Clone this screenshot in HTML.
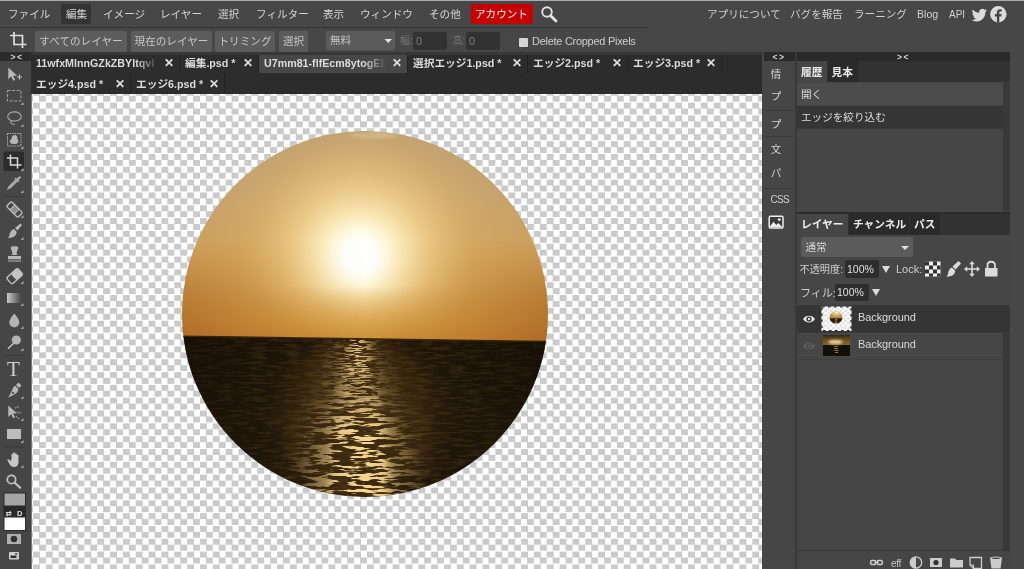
<!DOCTYPE html>
<html lang="ja">
<head>
<meta charset="utf-8">
<title>Photopea</title>
<style>
*{box-sizing:border-box;margin:0;padding:0}
html,body{width:1024px;height:569px;overflow:hidden;background:#474747}
body{position:relative;font-family:"Liberation Sans","Noto Sans CJK JP",sans-serif;font-size:11px;color:#dcdcdc;line-height:1}
.a{position:absolute;white-space:nowrap}
.t{position:absolute;white-space:nowrap;line-height:14px;height:14px}
#topline{left:0;top:0;width:1024px;height:1px;background:rgba(173,173,173,.996)}
/* menu */
.mi{top:6.5px;font-size:10.6px;color:#d6d6d6}
.mr{top:6.5px;font-size:10.6px;color:#d0d0d0}
#edit{left:61px;top:4px;width:30px;height:20px;background:rgba(52,52,52,.996);border-radius:2px}
#acct{left:471px;top:4px;width:62px;height:20px;background:rgba(200,0,0,.996);border-radius:2px}
#optline{left:0;top:27px;width:648px;height:1px;background:rgba(51,51,51,.996)}
/* options */
.btn{top:31px;height:21px;background:rgba(92,92,92,.996);border-radius:2px;color:#c8c8c8;font-size:10.6px;text-align:center;line-height:20px}
.inp{top:32px;height:18px;background:rgba(51,51,51,.996);border-radius:2px;color:#7d7d7d;font-size:11px;line-height:18px;padding-left:3px}
.lbl{top:34px;font-size:10px;color:#7a7a7a}
/* tabs */
#tabbar{left:31px;top:52px;width:731px;height:42px;background:rgba(45,45,45,.996)}
.tab{height:20px;background:rgba(45,45,45,.996);border-right:1px solid #222;font-weight:bold;font-size:10.7px;color:#dcdcdc;line-height:20px;padding-left:5px;overflow:hidden}
.tab.act{background:rgba(72,72,72,.996)}
.tab .x{position:absolute;top:0;right:4px;width:13px;text-align:center;font-size:12px;font-weight:bold;color:#e0e0e0;background:inherit}
.tab{background-clip:padding-box}
.tab .fd{position:absolute;top:0;right:17px;width:26px;height:20px;background:linear-gradient(90deg,rgba(45,45,45,0),#2d2d2d 85%)}
.tab.act .fd{background:linear-gradient(90deg,rgba(72,72,72,0),#484848 85%)}
/* canvas */
#canvas{left:32px;top:94px;width:730px;height:475px;background-color:rgba(255,255,255,.996);
 background-image:conic-gradient(#cbcbcb 25%,#fff 0 50%,#cbcbcb 0 75%,#fff 0);background-size:12.845px 12.835px;background-position:1px 1.75px;overflow:hidden}
/* left toolbar */
#ltb{left:0;top:52px;width:31px;height:517px;background:rgba(71,71,71,.996)}
#ltbtop{left:0;top:52px;width:31px;height:8.5px;background:rgba(43,43,43,.996)}
/* right */
#rcol{left:762px;top:52px;width:33px;height:517px;background:rgba(71,71,71,.996)}
#rcoltop{left:763.5px;top:52px;width:31px;height:8.5px;background:rgba(43,43,43,.996)}
#rsep{left:795px;top:52px;width:2.5px;height:517px;background:rgba(58,58,58,.996)}
#rp{left:797px;top:53px;width:213px;height:516px;background:rgba(71,71,71,.996)}
.rc{left:768px;font-size:10.5px;color:#d4d4d4;width:16px;text-align:center}
.ptab{height:20px;background:rgba(43,43,43,.996);font-weight:bold;font-size:10.7px;color:#eee;line-height:20px;padding-left:4px}
.ptab.act{background:rgba(71,71,71,.996)}
.hrow{font-size:10.6px;color:#dcdcdc;line-height:22px;padding-left:4px}
</style>
</head>
<body>
<div id="wrap" style="position:absolute;left:0;top:0;width:1024px;height:569px;opacity:.999;will-change:opacity">
<div class="a" id="topline"></div>
<!-- MENU -->
<div class="a" id="edit"></div>
<div class="a" id="acct"></div>
<span class="t mi" style="left:8px">ファイル</span>
<span class="t mi" style="left:66px">編集</span>
<span class="t mi" style="left:103px">イメージ</span>
<span class="t mi" style="left:160px">レイヤー</span>
<span class="t mi" style="left:218px">選択</span>
<span class="t mi" style="left:256px">フィルター</span>
<span class="t mi" style="left:323px">表示</span>
<span class="t mi" style="left:360px">ウィンドウ</span>
<span class="t mi" style="left:429px">その他</span>
<span class="t mi" style="left:475px;color:#fff">アカウント</span>
<span class="t mr" style="left:707px">アプリについて</span>
<span class="t mr" style="left:790px">バグを報告</span>
<span class="t mr" style="left:854px">ラーニング</span>
<span class="t mr" style="left:917px">Blog</span>
<span class="t mr" style="left:949px;top:7.5px;font-size:10px">API</span>
<div class="a" id="optline"></div>
<!-- OPTIONS -->
<div class="a btn" style="left:35px;width:92px">すべてのレイヤー</div>
<div class="a btn" style="left:131px;width:81px">現在のレイヤー</div>
<div class="a btn" style="left:215px;width:60px">トリミング</div>
<div class="a btn" style="left:279px;width:29px">選択</div>
<div class="a btn" style="left:326px;width:69px;text-align:left;padding-left:4px;height:19px;line-height:19px">無料</div>
<span class="t lbl" style="left:400px">幅:</span>
<div class="a inp" style="left:413px;width:34px">0</div>
<span class="t lbl" style="left:452.5px">高:</span>
<div class="a inp" style="left:466px;width:34px">0</div>
<div class="a" style="left:519px;top:38px;width:9px;height:9px;background:rgba(214,214,214,.996);border-radius:1px"></div>
<span class="t" style="left:532px;top:34px;font-size:11px;color:#cfcfcf;letter-spacing:-.28px">Delete Cropped Pixels</span>
<!-- top icons -->
<svg class="a" style="left:0;top:0" width="1024" height="53" viewBox="0 0 1024 53">
<path d="M14 32v12.500h12.500M10 35.500h12.500v12.500" fill="none" stroke="#e0e0e0" stroke-width="1.700"/>
<circle cx="547" cy="12" r="4.800" fill="none" stroke="#e4e4e4" stroke-width="1.900"/><path d="M550.700 15.700l5.300 5.300" stroke="#e4e4e4" stroke-width="2.800" stroke-linecap="round"/>
<path d="M384.500 39h7.500l-3.750 4z" fill="#e8e8e8"/>
<path d="M987 10.200c-.6.300-1.200.4-1.800.5.700-.4 1.100-1 1.400-1.700-.6.400-1.300.6-2 .8-.6-.6-1.400-1-2.300-1-1.800 0-3.200 1.400-3.200 3.200 0 .2 0 .5.100.7-2.600-.1-5-1.400-6.500-3.300-.3.500-.4 1-.4 1.600 0 1.100.6 2.100 1.400 2.600-.5 0-1-.2-1.400-.4 0 1.500 1.100 2.800 2.500 3.100-.5.100-1 .200-1.400.1.400 1.300 1.600 2.200 2.900 2.200-1.100.9-2.400 1.400-3.900 1.400h-.8c1.400.9 3.100 1.400 4.800 1.400 5.800 0 9-4.800 9-9v-.4c.600-.4 1.200-1 1.600-1.700z" fill="#dcdcdc"/>
<circle cx="998.300" cy="14.300" r="8.200" fill="#dcdcdc"/>
<path d="M999.300 22.500v-6h2l.3-2.400h-2.300v-1.500c0-.7.200-1.200 1.200-1.200h1.200v-2.100c-.2 0-.9-.1-1.800-.1-1.800 0-3 1.100-3 3.100v1.800h-2v2.400h2v6z" fill="#474747"/>
</svg>
<!-- TABS -->
<div class="a" id="tabbar"></div>
<div class="a tab" style="left:31px;top:53px;width:149px">11wfxMlnnGZkZBYltqvI<span class="fd"></span><span class="x">✕</span></div>
<div class="a tab" style="left:180px;top:53px;width:79px">編集.psd *<span class="x">✕</span></div>
<div class="a tab act" style="left:259px;top:53px;width:149px">U7mm81-flfEcm8ytogEB<span class="fd"></span><span class="x">✕</span></div>
<div class="a tab" style="left:408px;top:53px;width:120px">選択エッジ1.psd *<span class="x">✕</span></div>
<div class="a tab" style="left:528px;top:53px;width:100px">エッジ2.psd *<span class="x">✕</span></div>
<div class="a tab" style="left:628px;top:53px;width:94px">エッジ3.psd *<span class="x">✕</span></div>
<div class="a tab" style="left:31px;top:74px;width:100px">エッジ4.psd *<span class="x">✕</span></div>
<div class="a tab" style="left:131px;top:74px;width:94px">エッジ6.psd *<span class="x">✕</span></div>
<div class="a" style="left:31px;top:52px;width:731px;height:2.5px;background:rgba(56,56,56,.996)"></div>
<!-- CANVAS -->
<div class="a" id="canvas">
<svg class="a" style="left:0;top:0" width="731" height="475" viewBox="32 94 731 475">
<defs>
<clipPath id="cs"><path d="M182 336.300L548 341.500v156H182z"/></clipPath>
<clipPath id="cc"><circle cx="365" cy="314" r="183"/></clipPath>
<linearGradient id="sky" x1="0" y1="131" x2="0" y2="341" gradientUnits="userSpaceOnUse">
<stop offset="0" stop-color="#b79d76"/><stop offset=".3" stop-color="#c4a372"/><stop offset=".6" stop-color="#d0a158"/><stop offset=".82" stop-color="#cf9540"/><stop offset="1" stop-color="#c4852e"/>
</linearGradient>
<linearGradient id="hz" x1="0" y1="285" x2="0" y2="341" gradientUnits="userSpaceOnUse">
<stop offset="0" stop-color="#d49a3e" stop-opacity="0"/><stop offset=".6" stop-color="#d2963a" stop-opacity=".6"/><stop offset="1" stop-color="#c98a30" stop-opacity=".85"/>
</linearGradient>
<radialGradient id="sun" cx="360" cy="256" r="210" gradientUnits="userSpaceOnUse">
<stop offset="0" stop-color="#fff"/><stop offset=".08" stop-color="#fffffa"/><stop offset=".135" stop-color="#fff8dc"/><stop offset=".205" stop-color="#fce9b6" stop-opacity=".97"/><stop offset=".34" stop-color="#f1cf8a" stop-opacity=".8"/><stop offset=".55" stop-color="#e0b46a" stop-opacity=".4"/><stop offset=".75" stop-color="#d6aa62" stop-opacity=".14"/><stop offset="1" stop-color="#d0a660" stop-opacity="0"/>
</radialGradient>
<linearGradient id="sea" x1="0" y1="340" x2="0" y2="497" gradientUnits="userSpaceOnUse">
<stop offset="0" stop-color="#20170a"/><stop offset=".5" stop-color="#261c0c"/><stop offset="1" stop-color="#22190b"/>
</linearGradient>
<linearGradient id="wide" x1="182" y1="0" x2="548" y2="0" gradientUnits="userSpaceOnUse">
<stop offset="0" stop-color="#fff" stop-opacity=".17"/><stop offset=".5" stop-color="#fff" stop-opacity=".32"/><stop offset="1" stop-color="#fff" stop-opacity=".17"/>
</linearGradient>
<linearGradient id="vfar" x1="0" y1="338" x2="0" y2="420" gradientUnits="userSpaceOnUse"><stop offset="0" stop-color="#fff"/><stop offset=".4" stop-color="#fff" stop-opacity=".8"/><stop offset="1" stop-color="#fff" stop-opacity="0"/></linearGradient>
<linearGradient id="vnear" x1="0" y1="345" x2="0" y2="430" gradientUnits="userSpaceOnUse"><stop offset="0" stop-color="#fff" stop-opacity="0"/><stop offset="1" stop-color="#fff"/></linearGradient>
<filter id="bl" x="182" y="320" width="366" height="200" filterUnits="userSpaceOnUse"><feGaussianBlur stdDeviation="14 5"/></filter>
<mask id="mrefl" maskUnits="userSpaceOnUse" x="182" y="338" width="366" height="160"><rect x="182" y="338" width="366" height="160" fill="url(#wide)"/><path d="M344 334h22l40 94 14 80h-124l12-80z" fill="#fff" filter="url(#bl)"/></mask>
<mask id="mfar" maskUnits="userSpaceOnUse" x="182" y="338" width="366" height="160"><rect x="182" y="338" width="366" height="160" fill="url(#vfar)"/></mask>
<mask id="mnear" maskUnits="userSpaceOnUse" x="182" y="338" width="366" height="160"><rect x="182" y="338" width="366" height="160" fill="url(#vnear)"/></mask>
<filter id="wv" x="182" y="338" width="366" height="160" filterUnits="userSpaceOnUse" color-interpolation-filters="sRGB">
<feTurbulence type="fractalNoise" baseFrequency="0.045 0.3" numOctaves="3" seed="7" result="n"/>
<feColorMatrix in="n" type="matrix" values="0 0 0 0 0.97  0 0 0 0 0.84  0 0 0 0 0.56  10 7 0 0 -8.35"/>
</filter>
<filter id="wv2" x="182" y="338" width="366" height="160" filterUnits="userSpaceOnUse" color-interpolation-filters="sRGB">
<feTurbulence type="fractalNoise" baseFrequency="0.09 0.6" numOctaves="2" seed="3" result="n"/>
<feColorMatrix in="n" type="matrix" values="0 0 0 0 0.97  0 0 0 0 0.83  0 0 0 0 0.54  10 7 0 0 -8.35"/>
</filter>
<filter id="wd" x="182" y="338" width="366" height="160" filterUnits="userSpaceOnUse" color-interpolation-filters="sRGB">
<feTurbulence type="fractalNoise" baseFrequency="0.06 0.4" numOctaves="3" seed="11" result="n"/>
<feColorMatrix in="n" type="matrix" values="0 0 0 0 0.42  0 0 0 0 0.30  0 0 0 0 0.15  3.4 2.6 0 0 -2.75"/>
</filter>
<filter id="bl2" x="182" y="320" width="366" height="200" filterUnits="userSpaceOnUse"><feGaussianBlur stdDeviation="5 3"/></filter>
<mask id="mc2" maskUnits="userSpaceOnUse" x="182" y="338" width="366" height="160"><path d="M344 334h22l38 94 14 80h-122l14-80z" fill="#fff" opacity=".55" filter="url(#bl)"/><path d="M353 336h10l20 80 8 84h-62l6-84z" fill="#fff" filter="url(#bl2)"/></mask>
<linearGradient id="hzx" x1="182" y1="0" x2="548" y2="0" gradientUnits="userSpaceOnUse">
<stop offset="0" stop-color="#9c5c24" stop-opacity=".62"/><stop offset=".3" stop-color="#a8682a" stop-opacity=".22"/><stop offset=".5" stop-color="#b07030" stop-opacity="0"/><stop offset=".7" stop-color="#a8682a" stop-opacity=".22"/><stop offset="1" stop-color="#9c5c24" stop-opacity=".62"/>
</linearGradient>
<linearGradient id="hzm" x1="0" y1="240" x2="0" y2="341" gradientUnits="userSpaceOnUse"><stop offset="0" stop-color="#fff" stop-opacity="0"/><stop offset=".6" stop-color="#fff" stop-opacity=".7"/><stop offset="1" stop-color="#fff" stop-opacity="1"/></linearGradient>
<mask id="mhz" maskUnits="userSpaceOnUse" x="182" y="240" width="366" height="104"><rect x="182" y="240" width="366" height="104" fill="url(#hzm)"/></mask>
<filter id="bc" x="-20%" y="-150%" width="140%" height="400%"><feGaussianBlur stdDeviation="3 1.2"/></filter>
<linearGradient id="sdk" x1="182" y1="0" x2="548" y2="0" gradientUnits="userSpaceOnUse">
<stop offset="0" stop-color="#0c0904" stop-opacity=".55"/><stop offset=".32" stop-color="#0c0904" stop-opacity=".12"/><stop offset=".5" stop-color="#0c0904" stop-opacity="0"/><stop offset=".68" stop-color="#0c0904" stop-opacity=".12"/><stop offset="1" stop-color="#0c0904" stop-opacity=".55"/>
</linearGradient>
</defs>
<g clip-path="url(#cc)">
<rect x="182" y="131" width="366" height="212" fill="url(#sky)"/>
<rect x="182" y="131" width="366" height="212" fill="url(#sun)"/>
<ellipse cx="374" cy="135.500" rx="24" ry="3" fill="#d6c29e" opacity=".6" filter="url(#bc)"/>
<rect x="182" y="285" width="366" height="58" fill="url(#hz)"/>
<g mask="url(#mhz)"><rect x="182" y="240" width="366" height="104" fill="url(#hzx)"/></g>
<path d="M182 336.300L548 341.500v156H182z" fill="url(#sea)"/>
<g clip-path="url(#cs)">
<rect x="182" y="338" width="366" height="160" filter="url(#wd)" opacity=".34"/>
<ellipse cx="358" cy="420" rx="75" ry="85" fill="#74501c" opacity=".3" filter="url(#bl)"/>
<g mask="url(#mc2)"><g mask="url(#mnear)"><rect x="182" y="338" width="366" height="160" filter="url(#wv)"/></g><g mask="url(#mfar)"><rect x="182" y="338" width="366" height="160" filter="url(#wv2)"/></g></g>
<rect x="182" y="334" width="366" height="164" fill="url(#sdk)"/>
</g>
<path d="M182 336.300L548 341.500" stroke="#3a2408" stroke-width="1.500" fill="none"/>
</g>
</svg>

</div>
<!-- LEFT TOOLBAR -->
<div class="a" id="ltb"></div>
<div class="a" style="left:31px;top:94px;width:1px;height:475px;background:rgba(122,122,122,.996)"></div>
<div class="a" id="ltbtop"></div>
<svg class="a" style="left:0;top:0" width="32" height="569" viewBox="0 0 32 569">
<g fill="#b8b8b8" stroke="none">
<!-- corner triangles -->
<path d="M23.5 102v3h-3zM23.5 124v3h-3zM23.5 146v3h-3zM23.5 168v3h-3zM23.5 190v3h-3zM23.5 215v3h-3zM23.5 237v3h-3zM23.5 281v3h-3zM23.5 303v3h-3zM23.5 326v3h-3zM23.5 348v3h-3zM23.5 396v3h-3zM23.5 418v3h-3zM23.5 440v3h-3zM23.5 465v3h-3z" fill="#a8a8a8"/>
<!-- move -->
<path d="M8.3 67.5v11.8l2.9-2.7 2.1 4.2 1.9-.9-2-4.1h4z"/>
<path d="M19.5 74.5v5M17 77h5" stroke="#c4c4c4" stroke-width="1.2" fill="none"/>
<!-- marquee -->
<rect x="7.5" y="90.5" width="13.5" height="10.5" fill="none" stroke="#a4a4a4" stroke-width="1" stroke-dasharray="3 1.6"/>
<!-- lasso -->
<ellipse cx="14.5" cy="116.5" rx="6.8" ry="4.6" fill="none" stroke="#a8a8a8" stroke-width="1.1"/>
<path d="M12.5 120.5c-2 .2-2.500 2.300-.6 3.200 1.200.5 2.100.3 2.600 1.300" fill="none" stroke="#a8a8a8" stroke-width="1.1"/>
<!-- object select -->
<rect x="7.500" y="133.500" width="13.500" height="12.500" fill="none" stroke="#c4c4c4" stroke-width="1" stroke-dasharray="1.2 1.2"/>
<path d="M13 135.500c2-1.200 4.500-.2 4.300 2.200-.1 1.500 1.200 2.300 1 4-.3 2-2.500 2.300-4.500 2.300s-4-.5-4-2.500c0-1.800 1.700-2 1.900-3.500.2-1.200.4-1.900 1.300-2.500z"/>
<!-- crop active bg -->
<rect x="3.500" y="151.500" width="20.500" height="19.500" rx="1.500" fill="#2c2c2c"/>
<path d="M10.5 154.500v10.500h11M7 158h10.500v10.500" fill="none" stroke="#dadada" stroke-width="1.500"/>
<path d="M23.500 168v3h-3z" fill="#b8b8b8"/>
<!-- eyedropper -->
<path d="M19.200 176.500c1-.9 2.400.5 1.500 1.500l-2.200 2.300.9.900-1.300 1.300-.8-.8-6.500 6.500c-.7.700-1.500.3-2.200 1l-.8.800-.9-.9.800-.8c.7-.7.300-1.500 1-2.200l6.500-6.500-.8-.8 1.300-1.300.9.900z" fill="#aaa"/>
<!-- separator -->
<rect x="4" y="196" width="21" height="1" fill="#3a3a3a"/>
<!-- healing -->
<g transform="rotate(45 14.500 209.500)"><rect x="6.500" y="206" width="16" height="7" rx="1.500" fill="none" stroke="#c4c4c4" stroke-width="1.300"/><rect x="11.500" y="206" width="6" height="7" fill="#c4c4c4" opacity=".55"/><path d="M11.500 206v7M17.500 206v7" stroke="#c4c4c4" stroke-width="1"/></g>
<!-- brush -->
<path d="M20.500 223.500l-5.500 4.500 2.500 2.500 4.500-5.500zM14 229l2.500 2.500c.5 3-2 5.500-4.500 6-1.500.3-3 .5-4 1 1-1.200 1.200-2.500 1.500-4 .5-2.500 2-5 4.500-5.500z"/>
<!-- stamp -->
<path d="M11 247c0-1 7-1 7 0 .6 2-.8 3.500-1.200 5-.3 1.200 0 2.300 .7 3h-6c.7-.7 1-1.800 .7-3-.4-1.500-1.800-3-1.200-5zM8 256h13v3.200h-13zM8 260.500h13v1h-13z"/>
<!-- eraser -->
<g transform="rotate(-42 14.500 276)"><rect x="7" y="272" width="15" height="8.500" rx="2" fill="none" stroke="#c4c4c4" stroke-width="1.300"/><rect x="13" y="272" width="9" height="8.500" rx="2" fill="#c4c4c4"/></g>
<!-- dodge -->
<circle cx="16.300" cy="340" r="4.600" fill="#b5b5b5"/><path d="M13.300 343.500l-5.300 5.300" stroke="#c4c4c4" stroke-width="1.600" fill="none"/>
<!-- blur -->
<path d="M14.300 313.500c2 2.800 5 5.500 5 8.700 0 2.800-2.200 5-5 5s-5-2.200-5-5c0-3.200 3-5.900 5-8.700z" fill="#b5b5b5"/>
<!-- separator -->
<rect x="4" y="355" width="21" height="1" fill="#3a3a3a"/>
<!-- pen -->
<path d="M18.500 382.500l3 3-2.500 2.500-3-3zM15.200 385.800l3 3c.3 2.500-1.200 4.500-3.500 5.500l-6.500 3.500 3.500-6.500c1-2.300 1.500-5 3.500-5.500z"/>
<circle cx="13" cy="393" r="1.100" fill="#474747"/>
<!-- path select -->
<path d="M8.300 405.500v11.500l2.900-2.700 2 4 1.900-.9-2-4h4z"/>
<path d="M15 408l4-1.500M17 412l4 1M16 416.500l4 3" stroke="#aaa" stroke-width="1.100" stroke-dasharray="1.500 1" fill="none"/>
<!-- rect -->
<rect x="7" y="429" width="14" height="10" fill="#bdbdbd"/>
<!-- separator -->
<rect x="4" y="446.500" width="21" height="1" fill="#3a3a3a"/>
<!-- hand -->
<path d="M11.500 459v-4.500c0-1.300 1.700-1.300 1.700 0v-1.200c0-1.300 1.800-1.300 1.800 0v1c0-1.300 1.800-1.300 1.800 0v1.500c0-1.300 1.700-1.300 1.700 0v6.200c0 3-1.500 5-4.500 5-2.500 0-3.500-1.200-4.500-3l-2-3.500c-.6-1 .7-1.800 1.400-1l1.600 1.800z" fill="#c8c8c8"/>
<!-- zoom -->
<circle cx="11.500" cy="479.500" r="4.200" fill="none" stroke="#c4c4c4" stroke-width="1.700"/><path d="M14.700 482.700l5.500 5" stroke="#c4c4c4" stroke-width="2.200" stroke-linecap="round"/>
<!-- swatches -->
<rect x="3.500" y="492.500" width="22.500" height="38.500" fill="#2a2a2a"/>
<rect x="4.500" y="493.500" width="20.500" height="12" fill="#a6a6a6"/>
<rect x="4.500" y="517.500" width="20.500" height="12.500" fill="#fff"/>
<!-- quick mask -->
<rect x="7" y="534" width="14" height="10" fill="#b0b0b0"/><circle cx="14" cy="539" r="3.300" fill="#333"/>
<!-- screen mode -->
<rect x="9" y="552" width="10" height="7.500" rx="1" fill="#d0d0d0"/><rect x="10.500" y="555.500" width="6" height="2.500" fill="#333"/><rect x="15" y="553.300" width="2.500" height="1.200" fill="#333"/>
</g>
<defs><linearGradient id="gtool" x1="0" x2="1" y1="0" y2="0"><stop offset="0" stop-color="#c8c8c8"/><stop offset="1" stop-color="#4a4a4a"/></linearGradient></defs>
<rect x="7" y="293" width="14" height="10" fill="url(#gtool)"/>
<text x="7" y="375.500" font-family="Liberation Serif, serif" font-size="21" fill="#d0d0d0">T</text>
<text x="5.500" y="516" font-family="DejaVu Sans, Liberation Sans, sans-serif" font-size="7.500" font-weight="bold" fill="#e0e0e0">⇄</text>
<text x="17" y="516" font-family="Liberation Sans, sans-serif" font-size="7.500" font-weight="bold" fill="#e0e0e0">D</text>
<text x="10.500" y="60" font-family="Liberation Sans, sans-serif" font-size="8.500" font-weight="bold" fill="#d8d8d8" letter-spacing="1.5">&gt;&lt;</text>
</svg>

<!-- RIGHT -->
<div class="a" id="rcol"></div>
<div class="a" id="rcoltop"></div>
<div class="a" id="rsep"></div>
<div class="a" id="rp"></div>
<!-- collapsed column -->
<span class="t" style="left:772.5px;top:52.5px;font-size:8.5px;font-weight:bold;color:#d8d8d8;line-height:9px;height:9px;letter-spacing:1.5px">&lt;&gt;</span>
<span class="t rc" style="top:66.5px">情</span>
<span class="t rc" style="top:89px">プ</span>
<span class="t rc" style="top:116.5px">プ</span>
<span class="t rc" style="top:142px">文</span>
<span class="t rc" style="top:166px">パ</span>
<span class="t" style="left:770.5px;top:193px;font-size:10px;color:#cfcfcf;width:18px;text-align:center;letter-spacing:-.7px">CSS</span>
<div class="a" style="left:764px;top:109.5px;width:30px;height:1px;background:rgba(59,59,59,.996)"></div>
<div class="a" style="left:764px;top:136px;width:30px;height:1px;background:rgba(59,59,59,.996)"></div>
<div class="a" style="left:764px;top:188px;width:30px;height:1px;background:rgba(59,59,59,.996)"></div>
<svg class="a" style="left:768px;top:215px" width="16" height="14" viewBox="0 0 16 14"><rect x="1.200" y="1.200" width="13.800" height="11.800" rx="1.300" fill="#3c3c3c" stroke="#f0f0f0" stroke-width="1.500"/><path d="M1.500 12l4-5.300 2.800 3.300 2-2 4 4z" fill="#f0f0f0"/><circle cx="11.300" cy="4.600" r="1.400" fill="#f0f0f0"/></svg>
<!-- history panel -->
<div class="a" style="left:797px;top:52px;width:213px;height:8.5px;background:rgba(43,43,43,.996)"></div>
<span class="t" style="left:897px;top:52.5px;font-size:8.5px;font-weight:bold;color:#d8d8d8;line-height:9px;height:9px;letter-spacing:1.5px">&gt;&lt;</span>
<div class="a" style="left:797px;top:61px;width:213px;height:21px;background:rgba(51,51,51,.996)"></div>
<div class="a ptab act" style="left:797px;top:61px;width:30px;height:21px;line-height:22px">履歴</div>
<div class="a ptab" style="left:827.5px;top:61px;width:30px;height:21px;line-height:22px">見本</div>
<div class="a" style="left:1003px;top:81px;width:7px;height:130px;background:rgba(58,58,58,.996)"></div>
<div class="a hrow" style="left:797px;top:83px;width:206px;height:22px;background:rgba(77,77,77,.996)">開く</div>
<div class="a hrow" style="left:797px;top:106px;width:206px;height:22px;background:rgba(54,54,54,.996)">エッジを絞り込む</div>
<div class="a" style="left:797px;top:128px;width:206px;height:1px;background:rgba(59,59,59,.996)"></div>
<div class="a" style="left:797px;top:211.5px;width:213px;height:2.5px;background:rgba(45,45,45,.996)"></div>
<!-- layers panel -->
<div class="a" style="left:797px;top:214px;width:213px;height:21px;background:rgba(51,51,51,.996)"></div>
<div class="a ptab act" style="left:797px;top:214px;width:51px;height:21px;line-height:21px">レイヤー</div>
<div class="a ptab" style="left:849px;top:214px;width:60px;height:21px;line-height:21px">チャンネル</div>
<div class="a ptab" style="left:910px;top:214px;width:30px;height:21px;line-height:21px">パス</div>
<div class="a" style="left:800.5px;top:237px;width:112px;height:20px;background:rgba(92,92,92,.996);border-radius:2px;font-size:10.6px;line-height:20px;padding-left:5px;color:#d8d8d8">通常</div>
<div class="a" style="left:901px;top:245.5px;width:0;height:0;border-left:4px solid transparent;border-right:4px solid transparent;border-top:4px solid #e0e0e0"></div>
<span class="t" style="left:799.5px;top:262.5px;font-size:10.2px;color:#d0d0d0">不透明度:</span>
<div class="a" style="left:845px;top:260px;width:34px;height:18px;background:rgba(46,46,46,.996);border-radius:2px;font-size:10.5px;line-height:18px;padding-left:2px;color:#e0e0e0">100%</div>
<div class="a" style="left:882px;top:266px;width:0;height:0;border-left:4px solid transparent;border-right:4px solid transparent;border-top:7px solid #dcdcdc"></div>
<span class="t" style="left:896px;top:262px;font-size:11px;color:#d0d0d0">Lock:</span>
<span class="t" style="left:800px;top:286px;font-size:11px;color:#d0d0d0">フィル:</span>
<div class="a" style="left:835px;top:284px;width:34px;height:17px;background:rgba(46,46,46,.996);border-radius:2px;font-size:10.5px;line-height:17px;padding-left:2px;color:#e0e0e0">100%</div>
<div class="a" style="left:872px;top:289px;width:0;height:0;border-left:4px solid transparent;border-right:4px solid transparent;border-top:7px solid #dcdcdc"></div>
<!-- lock icons -->
<svg class="a" style="left:924px;top:260px" width="76" height="18" viewBox="924 260 76 18">
<rect x="925" y="261.500" width="15.500" height="15" fill="#f0f0f0"/>
<path d="M925 261.500h4v4h-4zM933 261.500h4v4h-4zM929 265.500h4v4h-4zM937 265.500h3.500v4h-3.500zM925 269.500h4v4h-4zM933 269.500h4v4h-4zM929 273.500h4v3h-4zM937 273.500h3.500v3h-3.500z" fill="#333"/>
<path d="M958.500 261l2.500 2.500-5.500 6-3-3zM952 267.500l3 3c.4 2.500-1.500 4.800-4 5.500-1.500.4-3.500.5-4.500 1 1-1.200 1.300-2.800 1.700-4.300.5-2.300 1.500-4.700 3.800-5.200z" fill="#dcdcdc"/>
<path d="M972 261l2.800 3.200h-2v4h4v-2l3.200 2.800-3.200 2.800v-2h-4v4h2l-2.800 3.200-2.800-3.200h2v-4h-4v2l-3.200-2.800 3.200-2.800v2h4v-4h-2z" fill="#dcdcdc"/>
<path d="M985 268h12.500v8.500h-12.500z" fill="#dcdcdc"/><path d="M987.500 268v-2.500c0-5 7.500-5 7.500 0v2.500" fill="none" stroke="#dcdcdc" stroke-width="1.800"/>
</svg>
<!-- layer rows -->
<div class="a" style="left:797px;top:305px;width:213px;height:1px;background:rgba(58,58,58,.996)"></div>
<div class="a" style="left:797px;top:306px;width:213px;height:26px;background:rgba(54,54,54,.996)"></div>
<div class="a" style="left:1003px;top:332px;width:7px;height:218px;background:rgba(58,58,58,.996)"></div>
<div class="a" style="left:797px;top:332px;width:206px;height:1px;background:rgba(61,61,61,.996)"></div>
<div class="a" style="left:797px;top:359px;width:206px;height:1px;background:rgba(65,65,65,.996)"></div>
<div class="a" style="left:797px;top:550px;width:213px;height:1px;background:rgba(58,58,58,.996)"></div>
<span class="t" style="left:858px;top:310px;font-size:11px;color:#dcdcdc;letter-spacing:-.1px">Background</span>
<span class="t" style="left:858px;top:337px;font-size:11px;color:#d8d8d8;letter-spacing:-.1px">Background</span>
<svg class="a" style="left:800px;top:306px" width="56" height="54" viewBox="800 306 56 54">
<defs>
<pattern id="ck2" width="5" height="5" patternUnits="userSpaceOnUse" x="822" y="307"><rect width="5" height="5" fill="#fff"/><rect width="2.500" height="2.500" fill="#e2e2e2"/><rect x="2.500" y="2.500" width="2.500" height="2.500" fill="#e2e2e2"/></pattern>
<radialGradient id="ms" cx=".5" cy=".35" r=".5"><stop offset="0" stop-color="#fff8e0"/><stop offset=".35" stop-color="#e8c47c"/><stop offset="1" stop-color="#b48a50"/></radialGradient>
<clipPath id="mc"><circle cx="836" cy="317.200" r="6.400"/></clipPath><filter id="tb" x="-50%" y="-100%" width="200%" height="300%"><feGaussianBlur stdDeviation="1.6 .9"/></filter>
<linearGradient id="ms2" x1="0" y1="0" x2="0" y2="1"><stop offset="0" stop-color="#3e2e16"/><stop offset=".5" stop-color="#6e5226"/><stop offset="1" stop-color="#8a6228"/></linearGradient>
</defs>
<!-- eye 1 -->
<path d="M803 319c2.500-4.500 9.500-4.500 12 0-2.500 4.500-9.500 4.500-12 0z" fill="#e8e8e8"/><circle cx="809" cy="319" r="2.600" fill="#363636"/><circle cx="809" cy="319" r="1.200" fill="#e8e8e8"/>
<!-- eye 2 dim -->
<path d="M803 346c2.500-4.500 9.500-4.500 12 0-2.500 4.500-9.500 4.500-12 0z" fill="#5e5e5e"/><circle cx="809" cy="346" r="2.600" fill="#474747"/><circle cx="809" cy="346" r="1.200" fill="#5e5e5e"/>
<!-- thumb 1 -->
<rect x="821.500" y="306.500" width="30" height="24.500" fill="#fff"/>
<rect x="823" y="308" width="27" height="21.500" fill="url(#ck2)"/>
<g clip-path="url(#mc)"><rect x="828" y="309" width="17" height="10" fill="url(#ms)"/><rect x="828" y="318.300" width="17" height="8" fill="#2a1c0c"/><path d="M835 319.500h2.500M834.500 321h3M835 322.500h2.500" stroke="#b08a40" stroke-width=".8"/></g>
<rect x="822" y="307" width="29" height="23.500" fill="none" stroke="#1a1a1a" stroke-width="1.200" stroke-dasharray="2.600 3.400"/>
<!-- thumb 2 -->
<rect x="823" y="335.500" width="27" height="20.500" fill="#14100a"/>
<rect x="823" y="335.500" width="27" height="9.500" fill="url(#ms2)"/>
<ellipse cx="835.500" cy="342" rx="7" ry="2.300" fill="#f6dca0" opacity=".9" filter="url(#tb)"/>
<path d="M834.500 346.500h3M834 348.500h4M834.500 350.500h4M835 352.500h3" stroke="#b8954a" stroke-width=".8"/>
</svg>
<!-- bottom icons -->
<svg class="a" style="left:866px;top:552.7px" width="140" height="17" viewBox="866 552 140 17">
<g fill="none" stroke="#cccccc" stroke-width="1.500"><rect x="870.700" y="559.500" width="5" height="4" rx="1.200"/><rect x="877.300" y="559.500" width="5" height="4" rx="1.200"/><path d="M874.500 561.500h4"/></g>
<circle cx="916" cy="561.500" r="5.700" fill="none" stroke="#cccccc" stroke-width="1.300"/><path d="M916 555.800a5.700 5.700 0 0 0 0 11.400z" fill="#cccccc"/>
<rect x="930" y="557" width="12" height="9" fill="#cccccc"/><circle cx="936" cy="561.500" r="2.600" fill="#333"/>
<path d="M950 557.500h5l1.500 1.500h6.500v7.500h-13z" fill="#cccccc"/>
<path d="M970 556.500h11.500v11h-8l-3.500-3.500z" fill="none" stroke="#cccccc" stroke-width="1.300"/><path d="M970 564h3.500v3.500" fill="none" stroke="#cccccc" stroke-width="1.100"/>
<path d="M990 557h12l-1.500 10.500h-9z" fill="#cccccc"/><ellipse cx="996" cy="557" rx="6" ry="1.500" fill="#cccccc"/><ellipse cx="996" cy="557.300" rx="4.500" ry=".8" fill="#474747"/>
<text x="891" y="565.500" font-family="Liberation Sans, sans-serif" font-size="10" fill="#c4c4c4" letter-spacing="-.3">eff</text>
</svg>

</div>
</body>
</html>
